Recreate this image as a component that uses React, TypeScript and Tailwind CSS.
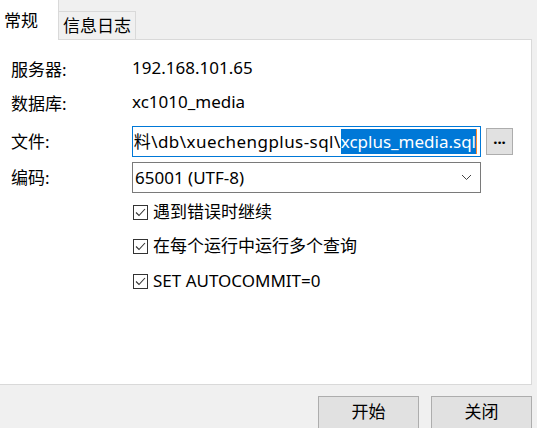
import React from "react";

const FONT = { fontFamily: '"Noto Sans", "Noto Sans CJK SC", sans-serif' };

function Check({ label }: { label: string }) {
  return (
    <div className="flex h-[34px] items-center pl-[122px]">
      <span className="flex h-[15px] w-[15px] items-center justify-center border border-[#333333] bg-white">
        <svg width="11" height="9" viewBox="0 0 11 9" fill="none">
          <path d="M1 4.5 L4 7.5 L10 1" stroke="#333333" strokeWidth="1.1" />
        </svg>
      </span>
      <span className="ml-[5px] text-[17px] text-black">{label}</span>
    </div>
  );
}

function Field({ label, children }: { label: string; children: React.ReactNode }) {
  return (
    <div className="flex h-full items-center">
      <span className="w-[121px] shrink-0 text-[17px] text-black">{label}</span>
      {children}
    </div>
  );
}

export default function App() {
  return (
    <div className="relative h-[428px] w-[537px] overflow-hidden bg-[#f0f0f0]" style={FONT}>
      {/* tabs */}
      <div className="flex h-[40px] items-end">
        <div className="flex h-[40px] w-[59px] items-center border-r border-[#d9d9d9] bg-white pl-[4px] pt-[2px] text-[17px] text-black">
          常规
        </div>
        <div className="mb-[1px] flex h-[28px] w-[77px] items-center justify-center border-r border-t border-[#d9d9d9] bg-[#f0f0f0] text-[17px] text-black">
          信息日志
        </div>
      </div>

      {/* panel */}
      <div className="-mt-[1px] flex h-[346px] w-[532px] flex-col border-r border-t border-b border-[#d9d9d9] bg-white pl-[11px] pt-[13px]">
        <div className="h-[34px]">
          <Field label="服务器:">
            <span className="-mt-[4px] text-[17px] text-black">192.168.101.65</span>
          </Field>
        </div>
        <div className="h-[34px]">
          <Field label="数据库:">
            <span className="-mt-[4px] text-[17px] text-black">xc1010_media</span>
          </Field>
        </div>
        <div className="mt-[5px] h-[31px]">
          <Field label="文件:">
            <div className="flex h-[31px] w-[349px] items-center justify-end overflow-hidden whitespace-nowrap border border-[#0078d7] bg-white pr-[3px] text-[17px]">
              <span className="tracking-[0.45px] text-black">料\db\xuechengplus-sql\</span>
              <span className="flex h-[25px] items-center bg-[#0078d7] text-white">xcplus_media.sql</span>
              <span className="h-[25px] w-[1px] shrink-0 bg-[#ff8728]" />
            </div>
            <button className="ml-[5px] flex h-[27px] w-[27px] items-center justify-center border border-[#adadad] bg-[#e1e1e1] pb-[6px] text-[15px] font-bold text-black">
              ...
            </button>
          </Field>
        </div>
        <div className="mt-[5px] h-[31px]">
          <Field label="编码:">
            <div className="flex h-[31px] w-[349px] items-center justify-between border border-[#7a7a7a] bg-white pl-[2px] pr-[8px] text-[17px] text-black">
              <span>65001 (UTF-8)</span>
              <svg width="11" height="7" viewBox="0 0 11 7" fill="none">
                <path d="M1 1 L5.5 5.5 L10 1" stroke="#444444" strokeWidth="1" />
              </svg>
            </div>
          </Field>
        </div>
        <div className="mt-[2px] flex flex-col">
          <Check label="遇到错误时继续" />
          <Check label="在每个运行中运行多个查询" />
          <div className="h-[1px]" />
          <Check label="SET AUTOCOMMIT=0" />
        </div>
      </div>

      {/* buttons */}
      <div className="flex justify-end gap-[12px] pr-[5px] pt-[11px]">
        <button className="flex h-[34px] w-[101px] items-center justify-center border border-[#adadad] bg-[#e1e1e1] pb-[2px] text-[17px] text-black">
          开始
        </button>
        <button className="flex h-[34px] w-[101px] items-center justify-center border border-[#adadad] bg-[#e1e1e1] pb-[2px] text-[17px] text-black">
          关闭
        </button>
      </div>
    </div>
  );
}
